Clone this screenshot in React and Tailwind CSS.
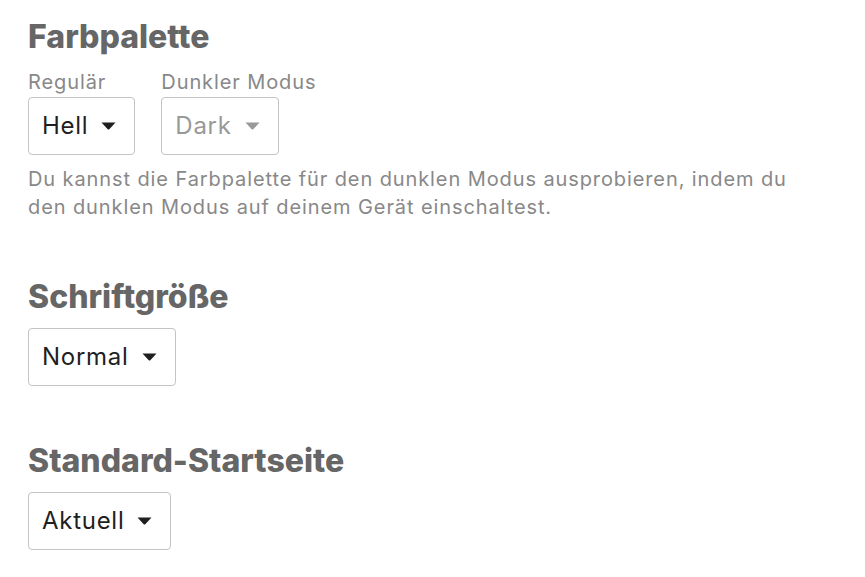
const font = { fontFamily: 'Inter, "Noto Sans", sans-serif' };

function Caret({ muted }) {
  return (
    <svg width="15" height="8" viewBox="0 0 15 8" className="shrink-0">
      <path d="M0.5 0.5 L14.5 0.5 L8.3 7.2 Q7.5 8 6.7 7.2 Z" fill={muted ? '#999999' : '#1f1f1f'} />
    </svg>
  );
}

function Select({ value, muted }) {
  return (
    <div
      className={`inline-flex h-[58px] items-center gap-[13px] rounded-[4px] border border-[#c4c4c4] bg-white pl-[13px] pr-[18px] text-[24px] tracking-[0.03em] ${
        muted ? 'text-[#999999]' : 'text-[#1f1f1f]'
      }`}
    >
      <span>{value}</span>
      <Caret muted={muted} />
    </div>
  );
}

function Heading({ children, className = '' }) {
  return (
    <h2 className={`text-[32px] font-extrabold leading-[40px] text-[#666666] ${className}`}>{children}</h2>
  );
}

export default function App() {
  return (
    <div className="min-h-screen bg-white pl-[28px] pt-[17px]" style={font}>
      <Heading>Farbpalette</Heading>
      <div className="mt-[13px] flex items-start gap-[26px]">
        <div className="flex flex-col items-start gap-[3px]">
          <span className="text-[20px] leading-[24px] tracking-[0.045em] text-[#888888]">Regulär</span>
          <Select value="Hell" />
        </div>
        <div className="flex flex-col items-start gap-[3px]">
          <span className="text-[20px] leading-[24px] tracking-[0.045em] text-[#888888]">Dunkler Modus</span>
          <Select value="Dark" muted />
        </div>
      </div>
      <p className="mt-[10px] w-[790px] text-[20px] leading-[28px] tracking-[0.045em] text-[#888888]">
        Du kannst die Farbpalette für den dunklen Modus ausprobieren, indem du den dunklen Modus auf deinem Gerät einschaltest.
      </p>

      <Heading className="mt-[56px]">Schriftgröße</Heading>
      <div className="mt-[11px]">
        <Select value="Normal" />
      </div>

      <Heading className="mt-[55px]">Standard-Startseite</Heading>
      <div className="mt-[11px]">
        <Select value="Aktuell" />
      </div>
    </div>
  );
}
